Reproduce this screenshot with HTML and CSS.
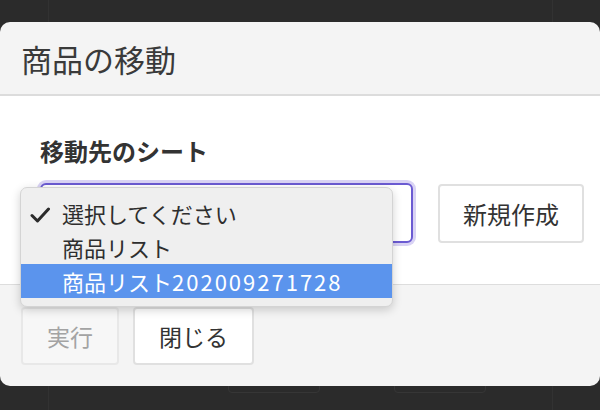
FILE: index.html
```html
<!DOCTYPE html>
<html lang="ja">

<head>
    <meta charset="UTF-8">
    <meta name="viewport" content="width=device-width, initial-scale=1.0">
    <title>商品の移動</title>
    <link rel="stylesheet" href="styles.css">
</head>

<body>
    <div class="page">
        <div class="page-panel">
            <div class="page-buttons">
                <div class="page-btn"></div>
                <div class="page-btn"></div>
            </div>
        </div>
    </div>

    <div class="modal">
        <div class="modal-header">
            <h1>商品の移動</h1>
        </div>
        <div class="modal-body">
            <div class="field-label">移動先のシート</div>
            <div class="field-row">
                <!-- select is open, its value is hidden under the popup -->
                <div class="select"></div>
                <button class="btn">新規作成</button>
            </div>
        </div>
        <div class="modal-footer">
            <button class="btn btn-footer" disabled>実行</button>
            <button class="btn btn-footer">閉じる</button>
        </div>

        <!-- native select popup, open -->
        <ul class="menu">
            <li class="menu-item checked">
                <svg class="check" width="20" height="16" viewBox="0 0 20 16">
                    <path d="M2 8.5 L7.5 14 L18.5 2" fill="none" stroke="#2b2b2b" stroke-width="3" stroke-linecap="round" stroke-linejoin="round" />
                </svg>
                選択してください
            </li>
            <li class="menu-item">商品リスト</li>
            <li class="menu-item active">商品リスト<span class="num">202009271728</span></li>
        </ul>
    </div>
</body>

</html>
```

FILE: styles.css
```css
body {
    margin: 0;
    height: 410px;
    overflow: hidden;
    background-color: #2b2b2b;
    font-family: "Noto Sans CJK JP", "Noto Sans", sans-serif;
    color: #333;
}

/* page under the overlay */
.page {
    height: 410px;
}

.page-panel {
    margin-left: 48px;
    width: 503px;
    height: 410px;
    border-left: 1px solid #323232;
    border-right: 1px solid #323232;
}

.page-buttons {
    display: flex;
    gap: 74px;
    padding-top: 330px;
    margin-left: 179px;
}

.page-btn {
    width: 90px;
    height: 61px;
    border: 1px solid #363636;
    border-radius: 4px;
}

/* modal */
.modal {
    position: absolute;
    top: 22px;
    left: 0;
    width: 600px;
    border-radius: 10px;
    overflow: hidden;
    background: #f4f4f4;
}

.modal-header {
    height: 72px;
    display: flex;
    align-items: center;
    padding-left: 21px;
    border-bottom: 2px solid #dcdcdc;
}

.modal-header h1 {
    margin: 0;
    font-size: 31px;
    font-weight: normal;
    color: #3a3a3a;
    line-height: 1;
}

.modal-body {
    background: #fff;
    padding: 40px 15px 41px 40px;
}

.field-label {
    font-size: 24px;
    font-weight: bold;
    line-height: 29px;
    margin-bottom: 18px;
    color: #333;
}

.field-row {
    display: flex;
    align-items: center;
    gap: 25px;
}

.select {
    box-sizing: border-box;
    flex-shrink: 0;
    width: 373px;
    height: 60px;
    border: 2px solid #6b5bd2;
    border-radius: 6px;
    box-shadow: 0 0 0 3px #d9d3f4;
    background: #fff;
}

.btn {
    font-family: inherit;
    font-size: 24px;
    color: #333;
    background: #fff;
    border: 2px solid #e0e0e0;
    border-radius: 4px;
    height: 59px;
    padding: 0 23px;
    white-space: nowrap;
    flex-shrink: 0;
    cursor: pointer;
}

.modal-footer {
    border-top: 1px solid #dddddd;
    padding: 22px 21px 21px;
    display: flex;
    gap: 14px;
}

.btn-footer {
    font-size: 23px;
    height: 58px;
    padding: 0 24px;
}

.btn-footer:disabled {
    background: #f7f7f7;
    border-color: #e8e8e8;
    color: #a3a3a3;
    cursor: default;
}

/* select popup */
.menu {
    position: absolute;
    top: 165px;
    left: 20px;
    width: 371px;
    margin: 0;
    padding: 8px 0;
    list-style: none;
    background: #efefef;
    border: 1px solid #d4d4d4;
    border-radius: 7px;
    box-shadow: 0 3px 10px rgba(0, 0, 0, 0.18);
}

.menu-item {
    position: relative;
    height: 34px;
    line-height: 34px;
    padding-left: 41px;
    font-size: 22px;
    color: #2e2e2e;
}

.menu-item.active {
    background: #5b94ed;
    color: #fff;
}

.num {
    letter-spacing: 2px;
}

.check {
    position: absolute;
    left: 9px;
    top: 11px;
}
```
